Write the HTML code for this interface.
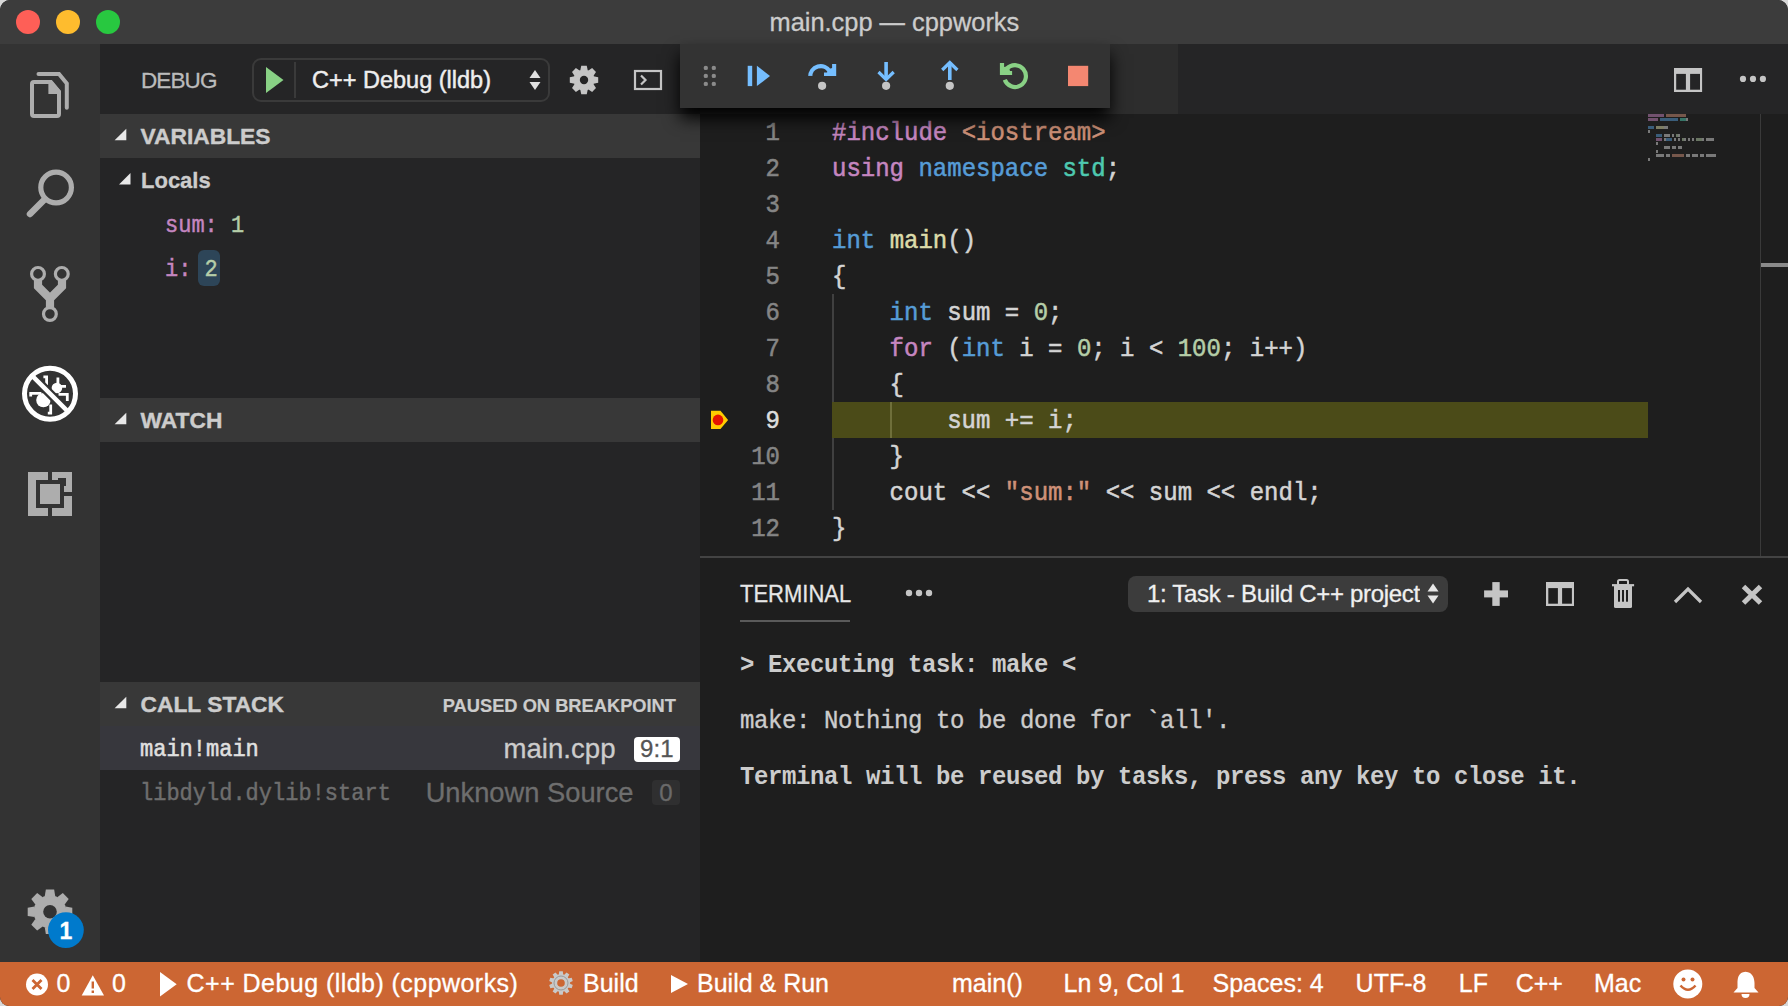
<!DOCTYPE html><html><head><meta charset="utf-8"><style>
*{margin:0;padding:0;box-sizing:border-box}
html,body{width:1788px;height:1006px;overflow:hidden;background:#d8d8d8}
body{font-family:"Liberation Sans",sans-serif;position:relative}
#win{position:absolute;left:0;top:0;width:1788px;height:1006px;border-radius:10px 10px 9px 9px;overflow:hidden;background:#1e1e1e}
.kw{color:#c586c0}.st{color:#ce9178}.bl{color:#569cd6}.ty{color:#4ec9b0}.fn{color:#dcdcaa}.nu{color:#b5cea8}
.code{position:absolute;font-family:"Liberation Mono",monospace;font-size:24px;line-height:36px;white-space:pre;color:#d4d4d4;transform:scaleY(1.11);transform-origin:0 8px;-webkit-text-stroke-width:0.5px}
.ln{position:absolute;left:700px;width:80px;text-align:right;font-family:"Liberation Mono",monospace;font-size:24px;line-height:36px;color:#858585;transform:scaleY(1.11);transform-origin:0 8px;-webkit-text-stroke-width:0.5px}
.term{position:absolute;left:740px;font-family:"Liberation Mono",monospace;font-size:24px;line-height:28px;letter-spacing:-0.4px;white-space:pre;color:#cccccc;transform:scaleY(1.11);transform-origin:0 4px}
svg{position:absolute;left:0;top:0}
</style></head><body><div id="win">
<div style="position:absolute;left:0px;top:0px;width:1788px;height:44px;background:#3c3c3c;"></div>
<div style="position:absolute;left:0px;top:44px;width:100px;height:918px;background:#333333;"></div>
<div style="position:absolute;left:100px;top:44px;width:600px;height:918px;background:#252526;"></div>
<div style="position:absolute;left:700px;top:44px;width:1088px;height:70px;background:#252526;"></div>
<div style="position:absolute;left:700px;top:44px;width:478px;height:70px;background:#2d2d2d;"></div>
<div style="position:absolute;left:700px;top:114px;width:1088px;height:442px;background:#1e1e1e;"></div>
<div style="position:absolute;left:700px;top:556px;width:1088px;height:2px;background:#434343;"></div>
<div style="position:absolute;left:0px;top:962px;width:1788px;height:44px;background:#cc6633;"></div>
<div style="position:absolute;left:16px;top:10px;width:24px;height:24px;border-radius:50%;background:#fe5f57"></div>
<div style="position:absolute;left:56px;top:10px;width:24px;height:24px;border-radius:50%;background:#febc2e"></div>
<div style="position:absolute;left:96px;top:10px;width:24px;height:24px;border-radius:50%;background:#28c840"></div>
<div style="position:absolute;top:9.50px;font-size:25.40px;line-height:25.40px;color:#cccccc;font-weight:normal;font-family:'Liberation Sans',sans-serif;white-space:pre;left:769.50px;-webkit-text-stroke-width:0.3px;">main.cpp — cppworks</div>
<div style="position:absolute;top:69.55px;font-size:22.50px;line-height:22.50px;color:#bbbbbb;font-weight:normal;font-family:'Liberation Sans',sans-serif;white-space:pre;left:141.00px;-webkit-text-stroke-width:0.3px;letter-spacing:-0.9px;">DEBUG</div>
<div style="position:absolute;left:252px;top:58px;width:298px;height:44px;border:2px solid #3a3a3a;border-radius:9px"></div>
<div style="position:absolute;left:293.5px;top:62px;width:2px;height:36px;background:#3a3a3a;"></div>
<svg width="1788" height="1006" viewBox="0 0 1788 1006"><polygon points="266,67 283.5,80 266,93" fill="#89d185"/><polygon points="535,70 540.5,78 529.5,78" fill="#e0e0e0"/><polygon points="529.5,82 540.5,82 535,90" fill="#e0e0e0"/></svg>
<div style="position:absolute;top:68.91px;font-size:23.50px;line-height:23.50px;color:#eeeeee;font-weight:normal;font-family:'Liberation Sans',sans-serif;white-space:pre;left:312.00px;-webkit-text-stroke-width:0.45px;">C++ Debug (lldb)</div>
<svg width="1788" height="1006" viewBox="0 0 1788 1006"><g fill="#c5c5c5"><circle cx="584" cy="80" r="10.5"/><polygon points="580.25,70.50 587.75,70.50 586.75,65.80 581.25,65.80"/><polygon points="588.07,70.63 593.37,75.93 595.99,71.90 592.10,68.01"/><polygon points="593.50,76.25 593.50,83.75 598.20,82.75 598.20,77.25"/><polygon points="593.37,84.07 588.07,89.37 592.10,91.99 595.99,88.10"/><polygon points="587.75,89.50 580.25,89.50 581.25,94.20 586.75,94.20"/><polygon points="579.93,89.37 574.63,84.07 572.01,88.10 575.90,91.99"/><polygon points="574.50,83.75 574.50,76.25 569.80,77.25 569.80,82.75"/><polygon points="574.63,75.93 579.93,70.63 575.90,68.01 572.01,71.90"/></g><circle cx="584" cy="80" r="4.2" fill="#252526"/><rect x="635" y="71" width="26" height="18" fill="none" stroke="#c5c5c5" stroke-width="2.2"/><polyline points="641,75.5 645.5,80 641,84.5" fill="none" stroke="#c5c5c5" stroke-width="2.2"/></svg>
<div style="position:absolute;left:100px;top:114px;width:600px;height:44px;background:#383838;"></div>
<svg width="1788" height="1006" viewBox="0 0 1788 1006"><polygon points="126.3,128.8 126.3,140.3 114.6,140.3" fill="#e8e8e8"/></svg>
<div style="position:absolute;top:125.20px;font-size:22.80px;line-height:22.80px;color:#cccccc;font-weight:bold;font-family:'Liberation Sans',sans-serif;white-space:pre;left:140.50px;-webkit-text-stroke-width:0.4px;">VARIABLES</div>
<div style="position:absolute;left:100px;top:398px;width:600px;height:44px;background:#383838;"></div>
<svg width="1788" height="1006" viewBox="0 0 1788 1006"><polygon points="126.3,412.8 126.3,424.3 114.6,424.3" fill="#e8e8e8"/></svg>
<div style="position:absolute;top:409.20px;font-size:22.80px;line-height:22.80px;color:#cccccc;font-weight:bold;font-family:'Liberation Sans',sans-serif;white-space:pre;left:140.50px;-webkit-text-stroke-width:0.4px;">WATCH</div>
<div style="position:absolute;left:100px;top:682px;width:600px;height:44px;background:#383838;"></div>
<svg width="1788" height="1006" viewBox="0 0 1788 1006"><polygon points="126.3,696.8 126.3,708.3 114.6,708.3" fill="#e8e8e8"/></svg>
<div style="position:absolute;top:693.20px;font-size:22.80px;line-height:22.80px;color:#cccccc;font-weight:bold;font-family:'Liberation Sans',sans-serif;white-space:pre;left:140.50px;-webkit-text-stroke-width:0.4px;">CALL STACK</div>
<div style="position:absolute;top:697.01px;font-size:18.30px;line-height:18.30px;color:#cccccc;font-weight:bold;font-family:'Liberation Sans',sans-serif;white-space:pre;right:1112.00px;-webkit-text-stroke-width:0.2px;">PAUSED ON BREAKPOINT</div>
<svg width="1788" height="1006" viewBox="0 0 1788 1006"><polygon points="130.5,173 130.5,184.5 119,184.5" fill="#e8e8e8"/></svg>
<div style="position:absolute;top:170.38px;font-size:22.00px;line-height:22.00px;color:#cccccc;font-weight:bold;font-family:'Liberation Sans',sans-serif;white-space:pre;left:141.00px;-webkit-text-stroke-width:0.3px;">Locals</div>
<div style="position:absolute;top:215.15px;font-size:22.00px;line-height:22.00px;color:#cccccc;font-weight:normal;font-family:'Liberation Mono',monospace;white-space:pre;left:165.00px;-webkit-text-stroke-width:0.4px;transform:scaleY(1.1);transform-origin:0 5px;"><span style="color:#c586c0">sum:</span> <span style="color:#b5cea8">1</span></div>
<div style="position:absolute;left:198px;top:250px;width:22px;height:36px;border-radius:6px;background:#2d4558"></div>
<div style="position:absolute;top:259.45px;font-size:22.00px;line-height:22.00px;color:#cccccc;font-weight:normal;font-family:'Liberation Mono',monospace;white-space:pre;left:165.00px;-webkit-text-stroke-width:0.4px;transform:scaleY(1.1);transform-origin:0 5px;"><span style="color:#c586c0">i:</span> <span style="color:#b5cea8">2</span></div>
<div style="position:absolute;left:100px;top:726px;width:600px;height:44px;background:#37373d;"></div>
<div style="position:absolute;top:739.15px;font-size:22.00px;line-height:22.00px;color:#e0e0e0;font-weight:normal;font-family:'Liberation Mono',monospace;white-space:pre;left:140.00px;-webkit-text-stroke-width:0.5px;transform:scaleY(1.1);transform-origin:0 5px;">main!main</div>
<div style="position:absolute;top:735.14px;font-size:27.60px;line-height:27.60px;color:#cccccc;font-weight:normal;font-family:'Liberation Sans',sans-serif;white-space:pre;right:1172.50px;-webkit-text-stroke-width:0.3px;">main.cpp</div>
<div style="position:absolute;left:633.5px;top:736.5px;width:46.5px;height:25px;border-radius:4px;background:#ffffff"></div>
<div style="position:absolute;top:737.18px;font-size:24.00px;line-height:24.00px;color:#555555;font-weight:normal;font-family:'Liberation Sans',sans-serif;white-space:pre;left:656.80px;width:0;display:flex;justify-content:center;-webkit-text-stroke-width:0.3px;">9:1</div>
<div style="position:absolute;top:783.15px;font-size:22.00px;line-height:22.00px;color:#6e6e6e;font-weight:normal;font-family:'Liberation Mono',monospace;white-space:pre;left:140.00px;-webkit-text-stroke-width:0.4px;transform:scaleY(1.1);transform-origin:0 5px;">libdyld.dylib!start</div>
<div style="position:absolute;top:779.39px;font-size:27.30px;line-height:27.30px;color:#6e6e6e;font-weight:normal;font-family:'Liberation Sans',sans-serif;white-space:pre;right:1154.50px;-webkit-text-stroke-width:0.3px;">Unknown Source</div>
<div style="position:absolute;left:652px;top:780px;width:28px;height:25px;border-radius:4px;background:#2f2f30"></div>
<div style="position:absolute;top:781.18px;font-size:24.00px;line-height:24.00px;color:#6a6a6a;font-weight:normal;font-family:'Liberation Sans',sans-serif;white-space:pre;left:666.00px;width:0;display:flex;justify-content:center;-webkit-text-stroke-width:0.3px;">0</div>
<svg width="1788" height="1006" viewBox="0 0 1788 1006"><path d="M32,84 Q32,82 34,82 L50.5,82 L59,92 L59,114 Q59,116 57,116 L34,116 Q32,116 32,114 Z" fill="none" stroke="#adadad" stroke-width="4" stroke-linejoin="round"/><polygon points="48.4,80 51.8,80 61,91 61,94 48.4,94" fill="#adadad"/><path d="M38.5,74 L59,74 L66.8,83.5 L66.8,107.8" fill="none" stroke="#adadad" stroke-width="4" stroke-linecap="round"/><circle cx="56.1" cy="187.5" r="15.3" fill="none" stroke="#adadad" stroke-width="5.2"/><line x1="30" y1="214" x2="44" y2="200" stroke="#adadad" stroke-width="6.5" stroke-linecap="round"/><path d="M38,280 L38,286.5 L50,298.5 L50,308 M62,280 L62,286.5 L50,298.5" fill="none" stroke="#adadad" stroke-width="8.2"/><circle cx="38" cy="273.9" r="6.4" fill="#333333" stroke="#adadad" stroke-width="3.2"/><circle cx="61.8" cy="273.9" r="6.4" fill="#333333" stroke="#adadad" stroke-width="3.2"/><circle cx="49.9" cy="314" r="6.4" fill="#333333" stroke="#adadad" stroke-width="3.2"/><clipPath id="dbgclip"><circle cx="50" cy="393.7" r="23"/></clipPath><g clip-path="url(#dbgclip)" fill="#ffffff" stroke="none"><circle cx="56.9" cy="388" r="5.3"/><circle cx="43.4" cy="400.1" r="7.2"/></g><g clip-path="url(#dbgclip)" fill="none" stroke="#ffffff" stroke-width="2.8"><path d="M43.4,376.8 L46.6,376.8 L46.6,385"/><path d="M57.9,377.5 L57.9,384"/><path d="M59.5,386.3 L66,386.3"/><path d="M58.5,394.3 L67.3,394.3 L67.3,401"/><path d="M41.4,393.3 L30.7,393.3 L30.7,396.5"/><path d="M50.7,404.5 L50.7,413.2 L47.8,413.2"/></g><line x1="31" y1="374.7" x2="69" y2="412.7" stroke="#333333" stroke-width="9"/><line x1="31" y1="374.7" x2="69" y2="412.7" stroke="#ffffff" stroke-width="4.5"/><circle cx="50" cy="393.7" r="25.5" fill="none" stroke="#ffffff" stroke-width="5"/><g fill="#adadad"><polygon points="28,472 48,472 48,480 36,480 36,508 48,508 48,516 28,516"/><polygon points="52,472 72,472 72,492 64,492 64,486 66,486 66,478 58,478 58,480 52,480"/><polygon points="52,508 64,508 64,496 72,496 72,516 52,516"/><rect x="40" y="484" width="20" height="20"/></g><g fill="#adadad"><circle cx="50" cy="911.8" r="16.5"/><polygon points="44.75,896.30 55.25,896.30 54.15,889.50 45.85,889.50"/><polygon points="57.25,897.13 64.67,904.55 68.70,898.97 62.83,893.10"/><polygon points="65.50,906.55 65.50,917.05 72.30,915.95 72.30,907.65"/><polygon points="64.67,919.05 57.25,926.47 62.83,930.50 68.70,924.63"/><polygon points="55.25,927.30 44.75,927.30 45.85,934.10 54.15,934.10"/><polygon points="42.75,926.47 35.33,919.05 31.30,924.63 37.17,930.50"/><polygon points="34.50,917.05 34.50,906.55 27.70,907.65 27.70,915.95"/><polygon points="35.33,904.55 42.75,897.13 37.17,893.10 31.30,898.97"/></g><circle cx="50" cy="911.8" r="6.8" fill="#333333"/><circle cx="65.9" cy="930.1" r="17.9" fill="#007acc"/></svg>
<div style="position:absolute;top:920.03px;font-size:23.00px;line-height:23.00px;color:#ffffff;font-weight:bold;font-family:'Liberation Sans',sans-serif;white-space:pre;left:65.90px;width:0;display:flex;justify-content:center;-webkit-text-stroke-width:0.3px;">1</div>
<div style="position:absolute;left:832px;top:402px;width:816px;height:36px;background:#4b4b18;"></div>
<div style="position:absolute;left:832px;top:294px;width:2px;height:108px;background:#404040;"></div>
<div style="position:absolute;left:832px;top:438px;width:2px;height:72px;background:#404040;"></div>
<div style="position:absolute;left:890px;top:402px;width:2px;height:36px;background:#6f6f3a;"></div>
<svg width="1788" height="1006" viewBox="0 0 1788 1006"><polygon points="711,410.8 720.5,410.8 728.1,419.9 720.5,429 711,429" fill="#ffcc00"/><circle cx="718" cy="419.9" r="5.3" fill="#e51400"/></svg>
<div class="ln" style="top:114px">1</div>
<div class="code" style="left:832px;top:114px"><span class="kw">#include</span> <span class="st">&lt;iostream&gt;</span></div>
<div class="ln" style="top:150px">2</div>
<div class="code" style="left:832px;top:150px"><span class="kw">using</span> <span class="bl">namespace</span> <span class="ty">std</span>;</div>
<div class="ln" style="top:186px">3</div>
<div class="ln" style="top:222px">4</div>
<div class="code" style="left:832px;top:222px"><span class="bl">int</span> <span class="fn">main</span>()</div>
<div class="ln" style="top:258px">5</div>
<div class="code" style="left:832px;top:258px">{</div>
<div class="ln" style="top:294px">6</div>
<div class="code" style="left:832px;top:294px">    <span class="bl">int</span> sum = <span class="nu">0</span>;</div>
<div class="ln" style="top:330px">7</div>
<div class="code" style="left:832px;top:330px">    <span class="kw">for</span> (<span class="bl">int</span> i = <span class="nu">0</span>; i &lt; <span class="nu">100</span>; i++)</div>
<div class="ln" style="top:366px">8</div>
<div class="code" style="left:832px;top:366px">    {</div>
<div class="ln" style="top:402px;color:#dddddd">9</div>
<div class="code" style="left:832px;top:402px">        sum += i;</div>
<div class="ln" style="top:438px">10</div>
<div class="code" style="left:832px;top:438px">    }</div>
<div class="ln" style="top:474px">11</div>
<div class="code" style="left:832px;top:474px">    cout &lt;&lt; <span class="st">"sum:"</span> &lt;&lt; sum &lt;&lt; endl;</div>
<div class="ln" style="top:510px">12</div>
<div class="code" style="left:832px;top:510px">}</div>
<svg width="1788" height="1006" viewBox="0 0 1788 1006"><g opacity="0.5"><rect x="1648" y="114" width="2" height="3" fill="#c586c0"/><rect x="1650" y="114" width="2" height="3" fill="#c586c0"/><rect x="1652" y="114" width="2" height="3" fill="#c586c0"/><rect x="1654" y="114" width="2" height="3" fill="#c586c0"/><rect x="1656" y="114" width="2" height="3" fill="#c586c0"/><rect x="1658" y="114" width="2" height="3" fill="#c586c0"/><rect x="1660" y="114" width="2" height="3" fill="#c586c0"/><rect x="1662" y="114" width="2" height="3" fill="#c586c0"/><rect x="1666" y="114" width="2" height="3" fill="#ce9178"/><rect x="1668" y="114" width="2" height="3" fill="#ce9178"/><rect x="1670" y="114" width="2" height="3" fill="#ce9178"/><rect x="1672" y="114" width="2" height="3" fill="#ce9178"/><rect x="1674" y="114" width="2" height="3" fill="#ce9178"/><rect x="1676" y="114" width="2" height="3" fill="#ce9178"/><rect x="1678" y="114" width="2" height="3" fill="#ce9178"/><rect x="1680" y="114" width="2" height="3" fill="#ce9178"/><rect x="1682" y="114" width="2" height="3" fill="#ce9178"/><rect x="1684" y="114" width="2" height="3" fill="#ce9178"/><rect x="1648" y="118" width="2" height="3" fill="#c586c0"/><rect x="1650" y="118" width="2" height="3" fill="#c586c0"/><rect x="1652" y="118" width="2" height="3" fill="#c586c0"/><rect x="1654" y="118" width="2" height="3" fill="#c586c0"/><rect x="1656" y="118" width="2" height="3" fill="#c586c0"/><rect x="1660" y="118" width="2" height="3" fill="#569cd6"/><rect x="1662" y="118" width="2" height="3" fill="#569cd6"/><rect x="1664" y="118" width="2" height="3" fill="#569cd6"/><rect x="1666" y="118" width="2" height="3" fill="#569cd6"/><rect x="1668" y="118" width="2" height="3" fill="#569cd6"/><rect x="1670" y="118" width="2" height="3" fill="#569cd6"/><rect x="1672" y="118" width="2" height="3" fill="#569cd6"/><rect x="1674" y="118" width="2" height="3" fill="#569cd6"/><rect x="1676" y="118" width="2" height="3" fill="#569cd6"/><rect x="1680" y="118" width="2" height="3" fill="#4ec9b0"/><rect x="1682" y="118" width="2" height="3" fill="#4ec9b0"/><rect x="1684" y="118" width="2" height="3" fill="#4ec9b0"/><rect x="1686" y="118" width="2" height="3" fill="#d4d4d4"/><rect x="1648" y="126" width="2" height="3" fill="#569cd6"/><rect x="1650" y="126" width="2" height="3" fill="#569cd6"/><rect x="1652" y="126" width="2" height="3" fill="#569cd6"/><rect x="1656" y="126" width="2" height="3" fill="#dcdcaa"/><rect x="1658" y="126" width="2" height="3" fill="#dcdcaa"/><rect x="1660" y="126" width="2" height="3" fill="#dcdcaa"/><rect x="1662" y="126" width="2" height="3" fill="#dcdcaa"/><rect x="1664" y="126" width="2" height="3" fill="#d4d4d4"/><rect x="1666" y="126" width="2" height="3" fill="#d4d4d4"/><rect x="1648" y="130" width="2" height="3" fill="#d4d4d4"/><rect x="1656" y="134" width="2" height="3" fill="#569cd6"/><rect x="1658" y="134" width="2" height="3" fill="#569cd6"/><rect x="1660" y="134" width="2" height="3" fill="#569cd6"/><rect x="1664" y="134" width="2" height="3" fill="#d4d4d4"/><rect x="1666" y="134" width="2" height="3" fill="#d4d4d4"/><rect x="1668" y="134" width="2" height="3" fill="#d4d4d4"/><rect x="1672" y="134" width="2" height="3" fill="#d4d4d4"/><rect x="1676" y="134" width="2" height="3" fill="#b5cea8"/><rect x="1678" y="134" width="2" height="3" fill="#d4d4d4"/><rect x="1656" y="138" width="2" height="3" fill="#c586c0"/><rect x="1658" y="138" width="2" height="3" fill="#c586c0"/><rect x="1660" y="138" width="2" height="3" fill="#c586c0"/><rect x="1664" y="138" width="2" height="3" fill="#d4d4d4"/><rect x="1666" y="138" width="2" height="3" fill="#569cd6"/><rect x="1668" y="138" width="2" height="3" fill="#569cd6"/><rect x="1670" y="138" width="2" height="3" fill="#569cd6"/><rect x="1674" y="138" width="2" height="3" fill="#d4d4d4"/><rect x="1678" y="138" width="2" height="3" fill="#d4d4d4"/><rect x="1682" y="138" width="2" height="3" fill="#b5cea8"/><rect x="1684" y="138" width="2" height="3" fill="#d4d4d4"/><rect x="1688" y="138" width="2" height="3" fill="#d4d4d4"/><rect x="1692" y="138" width="2" height="3" fill="#d4d4d4"/><rect x="1696" y="138" width="2" height="3" fill="#b5cea8"/><rect x="1698" y="138" width="2" height="3" fill="#b5cea8"/><rect x="1700" y="138" width="2" height="3" fill="#b5cea8"/><rect x="1702" y="138" width="2" height="3" fill="#d4d4d4"/><rect x="1706" y="138" width="2" height="3" fill="#d4d4d4"/><rect x="1708" y="138" width="2" height="3" fill="#d4d4d4"/><rect x="1710" y="138" width="2" height="3" fill="#d4d4d4"/><rect x="1712" y="138" width="2" height="3" fill="#d4d4d4"/><rect x="1656" y="142" width="2" height="3" fill="#d4d4d4"/><rect x="1664" y="146" width="2" height="3" fill="#d4d4d4"/><rect x="1666" y="146" width="2" height="3" fill="#d4d4d4"/><rect x="1668" y="146" width="2" height="3" fill="#d4d4d4"/><rect x="1672" y="146" width="2" height="3" fill="#d4d4d4"/><rect x="1674" y="146" width="2" height="3" fill="#d4d4d4"/><rect x="1678" y="146" width="2" height="3" fill="#d4d4d4"/><rect x="1680" y="146" width="2" height="3" fill="#d4d4d4"/><rect x="1656" y="150" width="2" height="3" fill="#d4d4d4"/><rect x="1656" y="154" width="2" height="3" fill="#d4d4d4"/><rect x="1658" y="154" width="2" height="3" fill="#d4d4d4"/><rect x="1660" y="154" width="2" height="3" fill="#d4d4d4"/><rect x="1662" y="154" width="2" height="3" fill="#d4d4d4"/><rect x="1666" y="154" width="2" height="3" fill="#d4d4d4"/><rect x="1668" y="154" width="2" height="3" fill="#d4d4d4"/><rect x="1672" y="154" width="2" height="3" fill="#ce9178"/><rect x="1674" y="154" width="2" height="3" fill="#ce9178"/><rect x="1676" y="154" width="2" height="3" fill="#ce9178"/><rect x="1678" y="154" width="2" height="3" fill="#ce9178"/><rect x="1680" y="154" width="2" height="3" fill="#ce9178"/><rect x="1682" y="154" width="2" height="3" fill="#ce9178"/><rect x="1686" y="154" width="2" height="3" fill="#d4d4d4"/><rect x="1688" y="154" width="2" height="3" fill="#d4d4d4"/><rect x="1692" y="154" width="2" height="3" fill="#d4d4d4"/><rect x="1694" y="154" width="2" height="3" fill="#d4d4d4"/><rect x="1696" y="154" width="2" height="3" fill="#d4d4d4"/><rect x="1700" y="154" width="2" height="3" fill="#d4d4d4"/><rect x="1702" y="154" width="2" height="3" fill="#d4d4d4"/><rect x="1706" y="154" width="2" height="3" fill="#d4d4d4"/><rect x="1708" y="154" width="2" height="3" fill="#d4d4d4"/><rect x="1710" y="154" width="2" height="3" fill="#d4d4d4"/><rect x="1712" y="154" width="2" height="3" fill="#d4d4d4"/><rect x="1714" y="154" width="2" height="3" fill="#d4d4d4"/><rect x="1648" y="158" width="2" height="3" fill="#d4d4d4"/></g></svg>
<div style="position:absolute;left:1760px;top:114px;width:1px;height:442px;background:#3a3a3a;"></div>
<div style="position:absolute;left:1761px;top:263px;width:27px;height:4px;background:#8a8a8a;"></div>
<svg width="1788" height="1006" viewBox="0 0 1788 1006"><rect x="1674" y="68" width="28.1" height="24" fill="#c5c5c5"/><rect x="1676.2" y="73.9" width="9.7" height="15.8" fill="#252526"/><rect x="1690.1" y="73.9" width="9.9" height="15.8" fill="#252526"/><circle cx="1743" cy="78.9" r="3.1" fill="#c5c5c5"/><circle cx="1753" cy="78.9" r="3.1" fill="#c5c5c5"/><circle cx="1762.9" cy="78.9" r="3.1" fill="#c5c5c5"/></svg>
<div style="position:absolute;left:680px;top:44px;width:430px;height:64px;background:#333333;box-shadow:0 10px 16px #000000"></div>
<svg width="1788" height="1006" viewBox="0 0 1788 1006"><circle cx="705.8" cy="67.9" r="2.2" fill="#8b8b8b"/><circle cx="705.8" cy="75.9" r="2.2" fill="#8b8b8b"/><circle cx="705.8" cy="83.9" r="2.2" fill="#8b8b8b"/><circle cx="713.8" cy="67.9" r="2.2" fill="#8b8b8b"/><circle cx="713.8" cy="75.9" r="2.2" fill="#8b8b8b"/><circle cx="713.8" cy="83.9" r="2.2" fill="#8b8b8b"/><rect x="747.7" y="65.8" width="4.5" height="20.3" fill="#75beff"/><polygon points="756.9,65.8 770,76 756.9,86.1" fill="#75beff"/><path d="M810.2,77 A10.5,10.5 0 0 1 829.8,71.4" fill="none" stroke="#75beff" stroke-width="4.3"/><polygon points="832.1,64 836.2,64 836.2,75.9 824,75.9 824,72.5 827,72.5 829,69 832.1,68" fill="#75beff"/><rect x="805" y="75.9" width="10" height="3" fill="#333333"/><circle cx="822.1" cy="85.8" r="4.1" fill="#c5c5c5"/><line x1="886.1" y1="62" x2="886.1" y2="79" stroke="#75beff" stroke-width="3.6"/><polyline points="878.5,72 886.1,79.5 893.7,72" fill="none" stroke="#75beff" stroke-width="3.2"/><circle cx="886.1" cy="85.8" r="4.1" fill="#c5c5c5"/><line x1="949.8" y1="62.5" x2="949.8" y2="80" stroke="#75beff" stroke-width="3.6"/><polyline points="942.2,70 949.8,62.5 957.4,70" fill="none" stroke="#75beff" stroke-width="3.2"/><circle cx="949.8" cy="85.8" r="4.1" fill="#c5c5c5"/><path d="M1006.65,69.1 A10.9,10.9 0 1 1 1004.76,79.83" fill="none" stroke="#89d185" stroke-width="4.2"/><polygon points="999.9,63 1004.1,63 1004.1,67 1008.5,66 1010,70.9 1012.1,70.9 1012.1,74.9 999.9,74.9" fill="#89d185"/><rect x="1068" y="65.8" width="20.2" height="20.3" fill="#f48771"/></svg>
<div style="position:absolute;top:583.88px;font-size:22.00px;line-height:22.00px;color:#e7e7e7;font-weight:normal;font-family:'Liberation Sans',sans-serif;white-space:pre;left:740.00px;transform:scaleY(1.110);transform-origin:0 18.62px;-webkit-text-stroke-width:0.25px;">TERMINAL</div>
<div style="position:absolute;left:740px;top:620px;width:110px;height:2px;background:#5a5a5a;"></div>
<svg width="1788" height="1006" viewBox="0 0 1788 1006"><circle cx="909" cy="593" r="3.2" fill="#c5c5c5"/><circle cx="919" cy="593" r="3.2" fill="#c5c5c5"/><circle cx="929" cy="593" r="3.2" fill="#c5c5c5"/></svg>
<div style="position:absolute;left:1128px;top:576px;width:320px;height:36px;border-radius:8px;background:#3c3c3c"></div>
<div style="position:absolute;left:1128px;top:576px;width:292.3px;height:36px;overflow:hidden">
<div style="position:absolute;top:5.88px;font-size:24.00px;line-height:24.00px;color:#f0f0f0;font-weight:normal;font-family:'Liberation Sans',sans-serif;white-space:pre;left:19.00px;-webkit-text-stroke-width:0.3px;letter-spacing:-0.3px;">1: Task - Build C++ project</div>
</div>
<svg width="1788" height="1006" viewBox="0 0 1788 1006"><polygon points="1433,583.5 1438.5,591.5 1427.5,591.5" fill="#e8e8e8"/><polygon points="1427.5,595.5 1438.5,595.5 1433,603.5" fill="#e8e8e8"/><rect x="1484.1" y="590.4" width="23.9" height="7" fill="#c5c5c5"/><rect x="1492.3" y="582.1" width="7.4" height="23.8" fill="#c5c5c5"/><rect x="1546" y="582" width="28" height="24" fill="#c5c5c5"/><rect x="1548.3" y="588.1" width="9.6" height="15.6" fill="#1e1e1e"/><rect x="1562.1" y="588.1" width="9.8" height="15.6" fill="#1e1e1e"/><rect x="1618" y="580" width="10" height="5" rx="1.5" fill="none" stroke="#c5c5c5" stroke-width="2"/><rect x="1612" y="584.1" width="22.1" height="2.2" fill="#c5c5c5"/><path d="M1614,586 L1632,586 L1632,606.5 Q1632,608 1630.5,608 L1615.5,608 Q1614,608 1614,606.5 Z" fill="#c5c5c5"/><rect x="1618" y="590" width="2" height="11.7" fill="#1e1e1e"/><rect x="1622" y="590" width="2" height="11.7" fill="#1e1e1e"/><rect x="1626" y="590" width="2" height="11.7" fill="#1e1e1e"/><polyline points="1675,602 1688,589 1701,602" fill="none" stroke="#c5c5c5" stroke-width="3.2"/><path d="M1743.5,586.5 L1760.5,603 M1760.5,586.5 L1743.5,603" stroke="#c5c5c5" stroke-width="5"/></svg>
<div class="term" style="top:650px;font-weight:bold">&gt; Executing task: make &lt;</div>
<div class="term" style="top:706px;-webkit-text-stroke-width:0.35px">make: Nothing to be done for `all'.</div>
<div class="term" style="top:762px;font-weight:bold">Terminal will be reused by tasks, press any key to close it.</div>
<svg width="1788" height="1006" viewBox="0 0 1788 1006"><circle cx="37" cy="984.5" r="11" fill="#ffffff"/><path d="M32.5,980 L41.5,989 M41.5,980 L32.5,989" stroke="#cc6633" stroke-width="2.8"/><polygon points="92.8,975.2 104,995.6 81.7,995.6" fill="#ffffff"/><rect x="91.6" y="981.5" width="2.4" height="7" fill="#cc6633"/><rect x="91.6" y="990.5" width="2.4" height="2.5" fill="#cc6633"/><polygon points="160,972 176.7,984.2 160,996.5" fill="#ffffff"/><polygon points="671,975 688,984 671,993" fill="#ffffff"/><g fill="#c9c9c9"><circle cx="561" cy="983" r="9"/><polygon points="558.75,975.00 563.25,975.00 562.75,971.20 559.25,971.20"/><polygon points="563.88,975.21 567.52,977.85 569.35,974.48 566.52,972.42"/><polygon points="567.91,978.39 569.30,982.67 572.76,981.02 571.68,977.69"/><polygon points="569.30,983.33 567.91,987.61 571.68,988.31 572.76,984.98"/><polygon points="567.52,988.15 563.88,990.79 566.52,993.58 569.35,991.52"/><polygon points="563.25,991.00 558.75,991.00 559.25,994.80 562.75,994.80"/><polygon points="558.12,990.79 554.48,988.15 552.65,991.52 555.48,993.58"/><polygon points="554.09,987.61 552.70,983.33 549.24,984.98 550.32,988.31"/><polygon points="552.70,982.67 554.09,978.39 550.32,977.69 549.24,981.02"/><polygon points="554.48,977.85 558.12,975.21 555.48,972.42 552.65,974.48"/></g><circle cx="561" cy="983" r="3.8" fill="#cc6633"/><circle cx="561" cy="983" r="7" fill="none" stroke="#9a9a9a" stroke-width="1"/><circle cx="1687.8" cy="984" r="14.5" fill="#ffffff"/><circle cx="1683.5" cy="979.5" r="2" fill="#cc6633"/><circle cx="1692.5" cy="979.5" r="2" fill="#cc6633"/><path d="M1680.5,985.5 Q1688,994 1695.5,985.5" fill="none" stroke="#cc6633" stroke-width="2.5"/><path d="M1745.5,971.7 C1738,972 1737.5,979 1737.5,983 L1737.5,988 L1733.5,992.5 L1758.5,992.5 L1754.5,988 L1754.5,983 C1754.5,979 1753,972 1745.5,971.7 Z" fill="#ffffff"/><path d="M1741.5,994 A4,4 0 0 0 1749.5,994 Z" fill="#ffffff"/></svg>
<div style="position:absolute;top:970.84px;font-size:25.00px;line-height:25.00px;color:#ffffff;font-weight:normal;font-family:'Liberation Sans',sans-serif;white-space:pre;left:186.60px;-webkit-text-stroke-width:0.3px;letter-spacing:0.45px;">C++ Debug (lldb) (cppworks)</div>
<div style="position:absolute;top:970.84px;font-size:25.00px;line-height:25.00px;color:#ffffff;font-weight:normal;font-family:'Liberation Sans',sans-serif;white-space:pre;left:56.50px;-webkit-text-stroke-width:0.3px;">0</div>
<div style="position:absolute;top:970.84px;font-size:25.00px;line-height:25.00px;color:#ffffff;font-weight:normal;font-family:'Liberation Sans',sans-serif;white-space:pre;left:112.00px;-webkit-text-stroke-width:0.3px;">0</div>
<div style="position:absolute;top:970.84px;font-size:25.00px;line-height:25.00px;color:#ffffff;font-weight:normal;font-family:'Liberation Sans',sans-serif;white-space:pre;left:583.00px;-webkit-text-stroke-width:0.3px;">Build</div>
<div style="position:absolute;top:970.84px;font-size:25.00px;line-height:25.00px;color:#ffffff;font-weight:normal;font-family:'Liberation Sans',sans-serif;white-space:pre;left:697.00px;-webkit-text-stroke-width:0.3px;">Build &amp; Run</div>
<div style="position:absolute;top:970.84px;font-size:25.00px;line-height:25.00px;color:#ffffff;font-weight:normal;font-family:'Liberation Sans',sans-serif;white-space:pre;left:952.00px;-webkit-text-stroke-width:0.3px;">main()</div>
<div style="position:absolute;top:970.84px;font-size:25.00px;line-height:25.00px;color:#ffffff;font-weight:normal;font-family:'Liberation Sans',sans-serif;white-space:pre;left:1063.60px;-webkit-text-stroke-width:0.3px;">Ln 9, Col 1</div>
<div style="position:absolute;top:970.84px;font-size:25.00px;line-height:25.00px;color:#ffffff;font-weight:normal;font-family:'Liberation Sans',sans-serif;white-space:pre;left:1212.50px;-webkit-text-stroke-width:0.3px;">Spaces: 4</div>
<div style="position:absolute;top:970.84px;font-size:25.00px;line-height:25.00px;color:#ffffff;font-weight:normal;font-family:'Liberation Sans',sans-serif;white-space:pre;left:1355.60px;-webkit-text-stroke-width:0.3px;">UTF-8</div>
<div style="position:absolute;top:970.84px;font-size:25.00px;line-height:25.00px;color:#ffffff;font-weight:normal;font-family:'Liberation Sans',sans-serif;white-space:pre;left:1458.80px;-webkit-text-stroke-width:0.3px;">LF</div>
<div style="position:absolute;top:970.84px;font-size:25.00px;line-height:25.00px;color:#ffffff;font-weight:normal;font-family:'Liberation Sans',sans-serif;white-space:pre;left:1515.70px;-webkit-text-stroke-width:0.3px;">C++</div>
<div style="position:absolute;top:970.84px;font-size:25.00px;line-height:25.00px;color:#ffffff;font-weight:normal;font-family:'Liberation Sans',sans-serif;white-space:pre;left:1594.00px;-webkit-text-stroke-width:0.3px;">Mac</div>
</div></body></html>
